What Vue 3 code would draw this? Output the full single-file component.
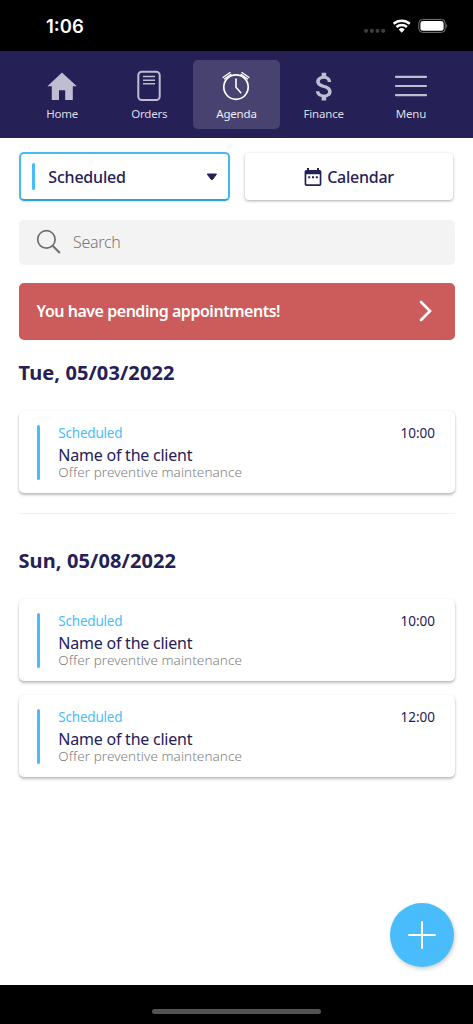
<script setup>
const tabs = [
  { id: 'home', label: 'Home' },
  { id: 'orders', label: 'Orders' },
  { id: 'agenda', label: 'Agenda', active: true },
  { id: 'finance', label: 'Finance' },
  { id: 'menu', label: 'Menu' },
]
const days = [
  { date: 'Tue, 05/03/2022', items: ['10:00'] },
  { date: 'Sun, 05/08/2022', items: ['10:00', '12:00'] },
]
</script>

<template>
  <div class="phone">
    <header class="status">
      <span class="clock">1:06</span>
      <svg class="signals" width="86" height="20" viewBox="0 0 86 20">
        <g fill="#3d3d3d">
          <circle cx="3" cy="13.8" r="2.1" /><circle cx="8.8" cy="13.8" r="2.1" />
          <circle cx="14.5" cy="13.8" r="2.1" /><circle cx="20.2" cy="13.8" r="2.1" />
        </g>
        <g fill="none" stroke="#fff" stroke-width="2.5">
          <path d="M30.6 6.8a12.2 12.2 0 0 1 16.2 0" />
          <path d="M33.5 10a7.8 7.8 0 0 1 10.4 0" />
        </g>
        <path d="M35.7 12.4a4.6 4.6 0 0 1 6 0l-3 3.3z" fill="#fff" />
        <rect x="55.8" y="2.4" width="26.4" height="13" rx="3.8" fill="none" stroke="#777" />
        <rect x="57.4" y="4" width="23.2" height="9.8" rx="2.4" fill="#fff" />
        <path d="M83.4 6.8q1.8 2.1 0 4.2z" fill="#888" />
      </svg>
    </header>

    <nav class="tabs">
      <div v-for="tab in tabs" :key="tab.id" class="tab" :class="{ active: tab.active }">
        <svg class="tab-icon" width="36" height="34" viewBox="0 0 36 34">
          <path v-if="tab.id === 'home'" d="M18 3.5 32.8 17.2H28.8V31H21.2V21.3H15V31H7.8V17.2H3.4z" fill="#bfbdd0" />
          <g v-else-if="tab.id === 'orders'" fill="none" stroke="#bfbdd0">
            <rect x="7.3" y="2.8" width="21.4" height="28.2" rx="3.5" stroke-width="2" />
            <path d="M12 7.5h12M12 11.2h12M12 14.8h12" stroke-width="1.5" />
          </g>
          <g v-else-if="tab.id === 'agenda'" fill="none" stroke="#fff" stroke-width="1.7">
            <circle cx="18" cy="18.1" r="12.2" />
            <path d="M18 9.5v8.7l5.2 6" stroke-width="1.6" />
            <path d="M4.6 8.8l7.8-5.5M31.4 8.8l-7.8-5.5" stroke-width="1.4" />
            <path d="M6 10.2l7.4-5.2M30 10.2l-7.4-5.2" stroke-width="1.3" />
          </g>
          <path
            v-else-if="tab.id === 'finance'"
            transform="translate(0.2 -0.9) scale(1.54)"
            d="M11.8 10.9c-2.27-.59-3-1.2-3-2.15 0-1.09 1.01-1.85 2.7-1.85 1.78 0 2.44.85 2.5 2.1h2.21c-.07-1.72-1.12-3.3-3.21-3.81V3h-3v2.16c-1.94.42-3.5 1.68-3.5 3.61 0 2.31 1.91 3.46 4.7 4.13 2.5.6 3 1.48 3 2.41 0 .69-.49 1.79-2.7 1.79-2.06 0-2.87-.92-2.98-2.1h-2.2c.12 2.19 1.76 3.42 3.68 3.83V21h3v-2.15c1.95-.37 3.5-1.5 3.5-3.55 0-2.84-2.43-3.81-4.7-4.4z"
            fill="#bfbdd0"
          />
          <path v-else d="M3 7.9h30M3 17h30M3 26.2h30" stroke="#bfbdd0" stroke-width="2.2" stroke-linecap="round" />
        </svg>
        <span class="tab-label">{{ tab.label }}</span>
      </div>
    </nav>

    <main class="content">
      <div class="filters">
        <button class="select">
          <i class="accent"></i>
          <span class="select-text">Scheduled</span>
          <svg width="12" height="8" viewBox="0 0 12 8"><path d="M1.2 1h9.3L6.9 6.1Q5.9 7.3 4.9 6.1z" fill="#252056" stroke="#252056" stroke-linejoin="round" /></svg>
        </button>
        <button class="calendar">
          <svg width="18" height="20" viewBox="0 0 18 20" fill="#252056">
            <path fill-rule="evenodd" d="M3 1h2v2h8V1h2v2h.7A1.7 1.7 0 0 1 17.4 4.7v12.6A1.7 1.7 0 0 1 15.7 19H2.3A1.7 1.7 0 0 1 .6 17.3V4.7A1.7 1.7 0 0 1 2.3 3H3zM2.3 7.2V17.3H15.7V7.2z" />
            <path d="M4.2 9.2h2v2h-2zM8 9.2h2v2H8zM11.8 9.2h2v2h-2z" />
          </svg>
          <span class="calendar-text">Calendar</span>
        </button>
      </div>

      <div class="search">
        <svg width="26" height="26" viewBox="0 0 26 26" fill="none" stroke="#6e6e6e" stroke-width="1.7">
          <circle cx="10.4" cy="10.4" r="8.7" /><path d="M16.7 16.7 23.8 24" stroke-width="2" />
        </svg>
        <span>Search</span>
      </div>

      <div class="banner">
        <span>You have pending appointments!</span>
        <svg width="14" height="24" viewBox="0 0 14 24"><path d="M2 3 11 12 2 21" fill="none" stroke="#fff" stroke-width="2.7" stroke-linecap="round" /></svg>
      </div>

      <section v-for="day in days" :key="day.date" class="day">
        <h2>{{ day.date }}</h2>
        <article v-for="time in day.items" :key="time" class="card">
          <i class="accent"></i>
          <div class="info">
            <span class="state">Scheduled</span>
            <span class="name">Name of the client</span>
            <span class="task">Offer preventive maintenance</span>
          </div>
          <time>{{ time }}</time>
        </article>
      </section>
    </main>

    <button class="fab">
      <svg width="30" height="30" viewBox="0 0 30 30"><path d="M15 1.3v27.4M1.3 15h27.4" stroke="#fff" stroke-width="2" /></svg>
    </button>
    <footer class="bottom"><i></i></footer>
  </div>
</template>

<style>
body { margin: 0; background: #fff; }
</style>

<style scoped>
* { box-sizing: border-box; }
.phone { position: relative; width: 473px; height: 1024px; overflow: hidden; display: flex; flex-direction: column; background: #fff; color: #252056; font-family: "Noto Sans", "Open Sans", sans-serif; white-space: nowrap; }
button { font: inherit; color: inherit; margin: 0; padding: 0; border: 0; background: #fff; }
svg { display: block; flex: none; }
.status { height: 51px; flex: none; background: #000; display: flex; justify-content: space-between; padding: 14px 24px 0 46px; }
.clock { color: #fff; font: 600 18.5px/25px Inter, sans-serif; }
.signals { margin-top: 3px; }
.tabs { height: 87px; flex: none; background: #252056; display: grid; grid-template-columns: repeat(5, 1fr); padding: 9px 18.5px 0; }
.tab { height: 69px; border-radius: 5px; display: flex; flex-direction: column; align-items: center; padding-top: 9px; color: #dddce6; }
.tab.active { background: #474270; color: #eeedf3; }
.tab-label { font-size: 11.5px; line-height: 16px; margin-top: 3px; letter-spacing: -.2px; }
.content { flex: 1; padding: 14px 18.5px 0; }
.filters { display: flex; justify-content: space-between; height: 49px; }
.select { width: 211px; border: 2px solid #49b8f3; border-bottom-color: #319fd8; border-radius: 5px; display: flex; align-items: center; padding: 0 10px 0 11px; box-shadow: 0 1px 2px #0002; }
.accent { width: 3.3px; border-radius: 2px; background: #49bdfb; flex: none; }
.select .accent { height: 27px; }
.select-text { flex: 1; text-align: left; margin-left: 13.5px; font-size: 16px; font-weight: 500; letter-spacing: -.2px; }
.calendar { width: 208px; height: 47px; margin: 1px 1.5px 0 0; border-radius: 4px; display: flex; align-items: center; justify-content: center; box-shadow: 0 1px 3px #0005; font-size: 16px; font-weight: 500; letter-spacing: -.25px; }
.calendar-text { margin-left: 5px; }
.search { height: 45px; margin-top: 18.5px; border-radius: 5px; background: #f3f3f3; display: flex; align-items: center; padding-left: 17.5px; font-size: 16px; font-weight: 300; color: #777; letter-spacing: -.3px; }
.search span { margin-left: 11px; }
.banner { height: 57px; margin-top: 18px; border-radius: 5px; background: #cc5b5b; color: #fff; display: flex; align-items: center; justify-content: space-between; padding: 0 21.5px 0 18px; font-size: 16px; font-weight: 600; letter-spacing: -.47px; }
.day { border-bottom: 1px solid #f1f1f1; padding-bottom: 20px; }
.day:last-child { border: 0; }
h2 { margin: 0; padding-top: 17px; height: 71px; font-size: 20px; line-height: 32px; font-weight: 700; letter-spacing: .1px; }
.day + .day h2 { padding-top: 31px; height: 85.5px; }
.card { height: 82px; border-radius: 5px; background: #fff; box-shadow: 0 2px 3px #0004, 0 0 2px #0001; display: flex; align-items: flex-start; padding: 14px 19.5px 0 18px; }
.card + .card { margin-top: 14px; }
.card .accent { height: 55px; }
.info { flex: 1; margin-left: 18.5px; display: flex; flex-direction: column; }
.state { color: #49bdfb; font-size: 13.5px; line-height: 16px; letter-spacing: -.2px; }
.name { font-size: 16px; line-height: 18px; margin-top: 5px; letter-spacing: -.23px; }
.task { color: #808080; font-size: 13.5px; font-weight: 300; line-height: 16px; letter-spacing: .06px; }
time { font-size: 13.5px; line-height: 16px; }
.fab { position: absolute; right: 18.8px; bottom: 57.5px; width: 64px; height: 64px; border-radius: 50%; background: #49bdfb; display: grid; place-items: center; box-shadow: 1px 2px 4px #0003; }
.bottom { height: 39px; flex: none; background: #000; display: flex; justify-content: center; padding-top: 24px; }
.bottom i { width: 169px; height: 5px; border-radius: 3px; background: #535353; }
</style>
